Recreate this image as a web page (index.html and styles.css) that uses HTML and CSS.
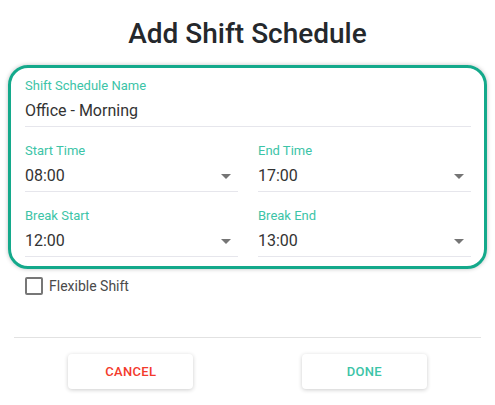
FILE: index.html
```html
<!DOCTYPE html>
<html>
<head>
<meta charset="utf-8">
<link rel="stylesheet" href="styles.css">
</head>
<body>
<div class="dialog">
  <h1 class="title">Add Shift Schedule</h1>
  <div class="card">
    <div class="field">
      <div class="label">Shift Schedule Name</div>
      <div class="value">Office - Morning</div>
    </div>
    <div class="grid">
      <div class="field">
        <div class="label">Start Time</div>
        <div class="value">08:00<span class="arrow"></span></div>
      </div>
      <div class="field">
        <div class="label">End Time</div>
        <div class="value">17:00<span class="arrow"></span></div>
      </div>
      <div class="field">
        <div class="label">Break Start</div>
        <div class="value">12:00<span class="arrow"></span></div>
      </div>
      <div class="field">
        <div class="label">Break End</div>
        <div class="value">13:00<span class="arrow"></span></div>
      </div>
    </div>
  </div>
  <label class="check"><span class="box"></span><span class="check-text">Flexible Shift</span></label>
  <div class="actions">
    <div class="slot"><button class="btn cancel">CANCEL</button></div>
    <div class="slot"><button class="btn done">DONE</button></div>
  </div>
</div>
</body>
</html>
```
FILE: styles.css
```css
* { box-sizing: border-box; }
html, body { margin: 0; padding: 0; background: #fff; }
body { font-family: Roboto, "Liberation Sans", sans-serif; width: 495px; height: 405px; overflow: hidden; }
.dialog { padding: 0 8px; display: flex; flex-direction: column; }
.title {
  margin: 0; padding-top: 16px; height: 65px;
  font-size: 28px; font-weight: 500; line-height: 36px;
  color: #25282c; text-align: center;
}
.card {
  border: 3px solid #14a98b; border-radius: 20px;
  box-shadow: 0 0 4px rgba(0,0,0,0.25);
  padding: 10px 13px 9px 14px;
  display: flex; flex-direction: column; gap: 16px;
}
.grid { display: grid; grid-template-columns: 1fr 1fr; column-gap: 20px; row-gap: 16px; }
.field { display: flex; flex-direction: column; }
.label { font-size: 13px; line-height: 16px; color: #3cc4a7; }
.value {
  margin-top: 5px; font-size: 16px; line-height: 24px; color: #333;
  padding-bottom: 3px; border-bottom: 1px solid #e6e6ec;
  display: flex; align-items: center; justify-content: space-between;
  padding-right: 7px;
}
.arrow {
  width: 0; height: 0; border-left: 5px solid transparent; border-right: 5px solid transparent;
  border-top: 5px solid #757575;
}
.check { display: flex; align-items: center; gap: 6px; margin: 8px 0 0 17px; height: 18px; }
.box { width: 18px; height: 18px; border: 2px solid #777; border-radius: 2px; }
.check-text { font-size: 14px; color: #4a4a4a; }
.actions {
  margin: 42px 6px 0 6px; border-top: 1px solid #e2e2e2; padding-top: 16px;
  display: grid; grid-template-columns: 1fr 1fr;
}
.slot { display: flex; justify-content: center; }
.btn {
  width: 125px; height: 35px; border: none; background: #fff; border-radius: 4px;
  box-shadow: 0 1px 4px rgba(0,0,0,0.2);
  font-family: Roboto, "Liberation Sans", sans-serif; font-size: 13px; font-weight: 500;
  letter-spacing: 0.3px;
}
.cancel { color: #f33a2c; }
.done { color: #3cc4a7; }
```
